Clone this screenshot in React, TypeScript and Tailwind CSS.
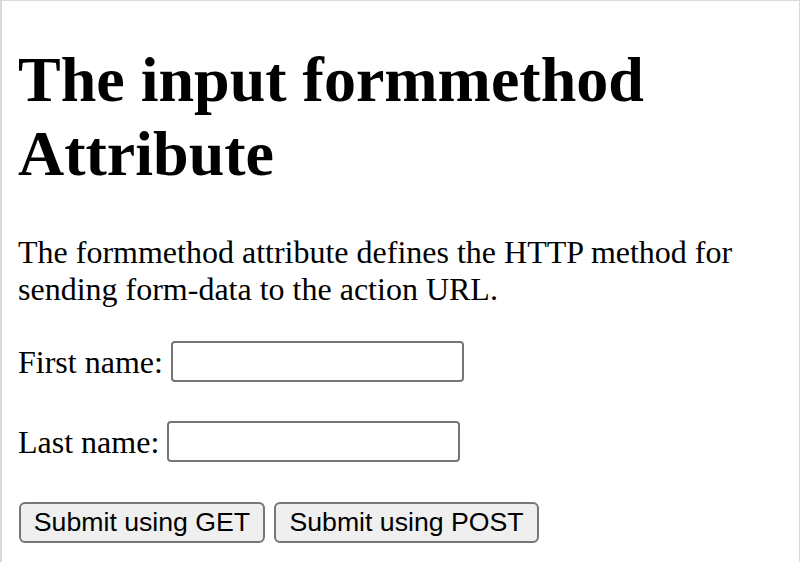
import React from "react";

export default function App() {
  return (
    <div className="w-[800px] h-[562px] overflow-hidden bg-white border-l-2 border-t border-r border-[#d9d9d9] text-black font-['Liberation_Serif',serif]">
      <div className="px-[16px] pt-[42px]">
        <h1 className="m-0 text-[64px] font-bold leading-[74px]">
          The input formmethod Attribute
        </h1>
        <p className="mt-[43px] text-[32px] leading-[37px]">
          The formmethod attribute defines the HTTP method for sending form-data to the action URL.
        </p>
        <form className="mt-[33px] flex flex-col gap-[39px] text-[32px]" onSubmit={(e) => e.preventDefault()}>
          <div className="flex items-center gap-[8px] h-[41px]">
            <label htmlFor="fname">First name:</label>
            <input
              id="fname"
              type="text"
              className="w-[293px] h-[41px] border-2 border-[#767676] rounded-[4px] bg-white px-[4px] text-[26px] font-['Liberation_Sans',sans-serif]"
            />
          </div>
          <div className="flex items-center gap-[8px] h-[41px]">
            <label htmlFor="lname">Last name:</label>
            <input
              id="lname"
              type="text"
              className="w-[293px] h-[41px] border-2 border-[#767676] rounded-[4px] bg-white px-[4px] text-[26px] font-['Liberation_Sans',sans-serif]"
            />
          </div>
          <div className="flex items-center gap-[9px] h-[41px] mt-[1px] pl-[1px]">
            <button
              type="submit"
              className="h-[41px] w-[246px] border-2 border-[#767676] rounded-[6px] bg-[#efefef] text-[26.67px] leading-none font-['Liberation_Sans',sans-serif]"
            >
              Submit using GET
            </button>
            <button
              type="submit"
              className="h-[41px] w-[265px] border-2 border-[#767676] rounded-[6px] bg-[#efefef] text-[26.67px] leading-none font-['Liberation_Sans',sans-serif]"
            >
              Submit using POST
            </button>
          </div>
        </form>
      </div>
    </div>
  );
}
